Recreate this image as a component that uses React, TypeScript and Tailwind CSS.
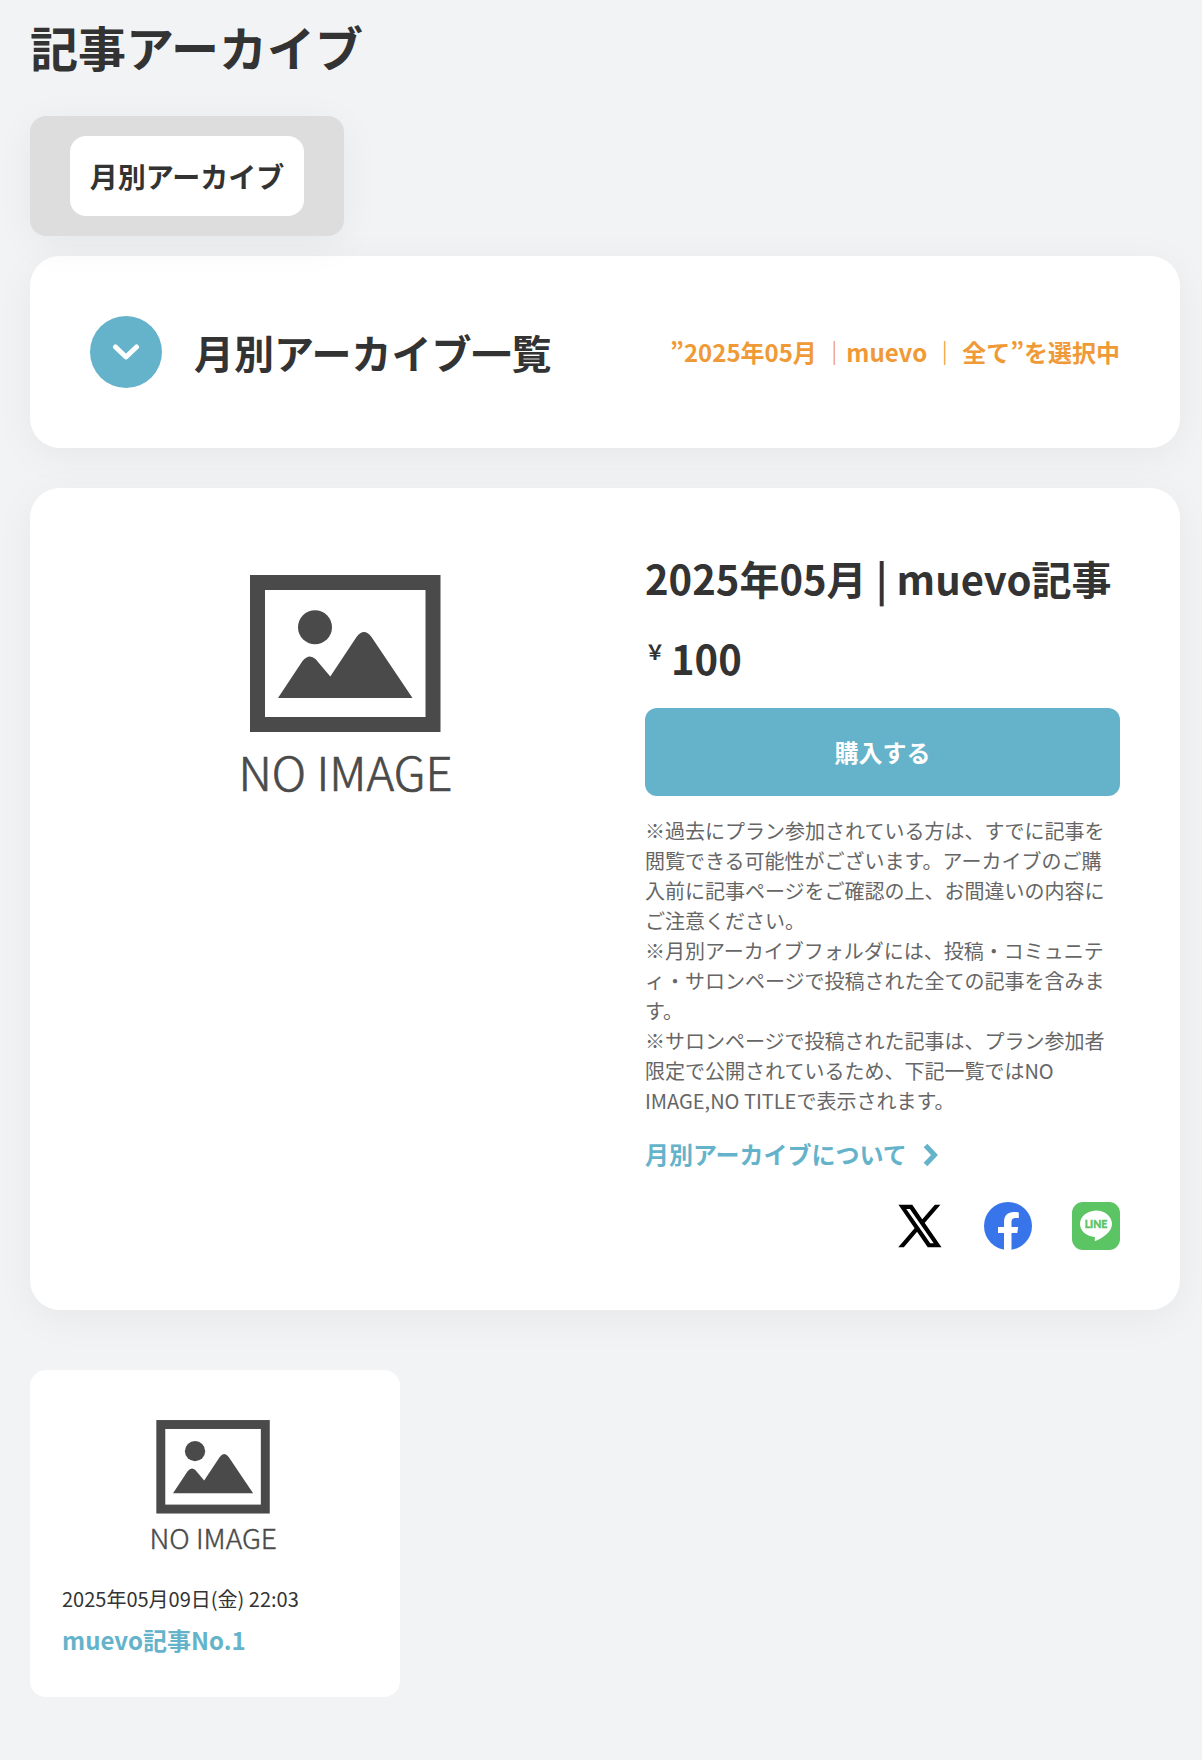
import type { ReactNode } from 'react';

const NOTICE = [
  '※過去にプラン参加されている方は、すでに記事を閲覧できる可能性がございます。アーカイブのご購入前に記事ページをご確認の上、お間違いの内容にご注意ください。',
  '※月別アーカイブフォルダには、投稿・コミュニティ・サロンページで投稿された全ての記事を含みます。',
  '※サロンページで投稿された記事は、プラン参加者限定で公開されているため、下記一覧ではNO IMAGE,NO TITLEで表示されます。',
];

const NoImage = ({ className }: { className: string }) => (
  <svg viewBox="0 0 220 240" className={className} fill="#4a4a4a">
    <rect x="21.500" y="7.5" width="175.5" height="142" fill="none" stroke="#4a4a4a" strokeWidth="15" />
    <circle cx="79" cy="52.2" r="17" />
    <path d="M42 123 L66.500 86 Q73 78 79.500 84 L94.300 101.500 L120.500 62 Q128 52 135.500 62 L176.500 123 Z" />
    <text
      x="2.500"
      y="216"
      fontSize="46.500"
      fontWeight="300"
      textLength="214"
      lengthAdjust="spacingAndGlyphs"
      stroke="#4a4a4a"
      strokeWidth=".7"
      fontFamily="'Noto Sans CJK JP', sans-serif"
    >
      NO IMAGE
    </text>
  </svg>
);

const XIcon = () => (
  <svg viewBox="0 0 24 24" className="size-12 overflow-visible p-[3.500px]" stroke="#000" strokeWidth=".9">
    <path d="M14.234 10.162 22.977 0h-2.072l-7.591 8.824L7.251 0H.258l9.168 13.343L.258 24H2.330l8.016-9.318L16.749 24h6.993zm-2.837 3.299-.929-1.329L3.076 1.560h3.182l5.965 8.532.929 1.329 7.754 11.090h-3.182z" />
  </svg>
);

const FacebookIcon = () => (
  <svg viewBox="0 0 48 48" className="size-12">
    <circle cx="24" cy="24" r="24" fill="#3975ea" />
    <path d="M20 48V31h-6v-6h6v-5c0-6.500 3.700-10 10-10 1.800 0 3.500.2 4.800.4v5.600h-3.200c-3 0-4.100 1.500-4.100 4V25h6.700l-1 6h-5.700v17z" fill="#fff" />
  </svg>
);

const LineIcon = () => (
  <svg viewBox="0 0 48 48" className="size-12">
    <rect width="48" height="48" rx="11" fill="#5bc463" />
    <path d="M24 8.500C15 9 8 14.400 8 22c0 6.500 5.700 11.700 13.500 12.700 1.500.3 1.600.8 1.400 2.100l-.2 1.300c-.1.900.4 1.200 1.300.7C29 36.500 40 30.500 40 22 40 14.400 33 8.500 24 8.500z" fill="#fff" />
    <text x="12.700" y="25.600" fontSize="10.500" fontWeight="700" textLength="22.500" fill="#5bc463" stroke="#5bc463" strokeWidth=".5" fontFamily="Lato, sans-serif">
      LINE
    </text>
  </svg>
);

const Card = ({ className, children }: { className: string; children: ReactNode }) => (
  <section className={`rounded-[30px] bg-white p-[60px] shadow-[0_8px_40px_rgba(0,0,0,0.05)] ${className}`}>
    {children}
  </section>
);

export default function App() {
  return (
    <main
      lang="ja"
      className="h-[1760px] w-[1202px] overflow-hidden bg-[#f2f3f5] pr-[22px] pl-[30px] font-['Noto_Sans_CJK_JP',sans-serif] text-[#333]"
    >
      <h1 className="pt-[10px] text-[48px] leading-[72px] font-bold">記事アーカイブ</h1>

      {/* Tabs */}
      <div className="relative z-10 mt-[34px] h-[120px] w-[314px] rounded-2xl bg-[#ddd] px-10 py-5 shadow-[0_8px_40px_rgba(0,0,0,0.05)]">
        <button className="h-20 w-[234px] rounded-2xl bg-white text-[28px] font-bold">月別アーカイブ</button>
      </div>

      {/* Month selector */}
      <Card className="mt-5 flex h-[192px] items-center">
        <span className="flex size-[72px] items-center justify-center rounded-full bg-[#65b3ca]">
          <svg viewBox="0 0 28 16" className="h-4 w-7" fill="none" stroke="#fff" strokeWidth="5" strokeLinecap="round" strokeLinejoin="round">
            <path d="M3.500 3l10.500 10L24.500 3" />
          </svg>
        </span>
        <h2 className="ml-8 text-[40px] leading-[60px] font-bold">月別アーカイブ一覧</h2>
        <p className="ml-auto text-[24px] font-bold whitespace-pre text-[#ef9a37]">”2025年05月 ｜muevo ｜ 全て”を選択中</p>
      </Card>

      {/* Archive detail */}
      <Card className="mt-10 flex h-[822px] justify-between">
        <div className="flex w-[511px] justify-center pt-[27px]">
          <NoImage className="h-[240px] w-[220px]" />
        </div>
        <div className="w-[475px]">
          <h2 className="text-[40px] leading-[60px] font-bold whitespace-nowrap">2025年05月 | muevo記事</h2>
          <p className="mt-5 flex h-[60px] items-start font-bold">
            <span className="w-[26px] pt-[9px] text-[20px] leading-[30px]">￥</span>
            <span className="text-[40px] leading-[60px]">100</span>
          </p>
          <button className="mt-5 h-[88px] w-full rounded-xl bg-[#65b3ca] text-[24px] font-bold text-white">購入する</button>
          <div className="mt-5 text-[20px] leading-[30px] text-[#666]">
            {NOTICE.map((line) => (
              <p key={line}>{line}</p>
            ))}
          </div>
          <a className="mt-5 flex items-center text-[24px] leading-9 font-bold text-[#65b3ca]">
            月別アーカイブについて
            <svg viewBox="0 0 16 24" className="mt-px ml-4 h-6 w-4" fill="none" stroke="#65b3ca" strokeWidth="5">
              <path d="M2.500 2.500l9 9.500-9 9.500" />
            </svg>
          </a>
          <div className="mt-[30px] flex justify-end gap-10">
            <XIcon />
            <FacebookIcon />
            <LineIcon />
          </div>
        </div>
      </Card>

      {/* Articles */}
      <article className="mt-[60px] h-[327px] w-[370px] rounded-2xl bg-white px-8 pt-[50px]">
        <NoImage className="ml-[86px] h-[143px] w-[131px]" />
        <p className="mt-[21px] text-[20px] leading-[30px]">2025年05月09日(金) 22:03</p>
        <h3 className="mt-2 text-[24px] leading-9 font-bold text-[#65b3ca]">muevo記事No.1</h3>
      </article>
    </main>
  );
}
